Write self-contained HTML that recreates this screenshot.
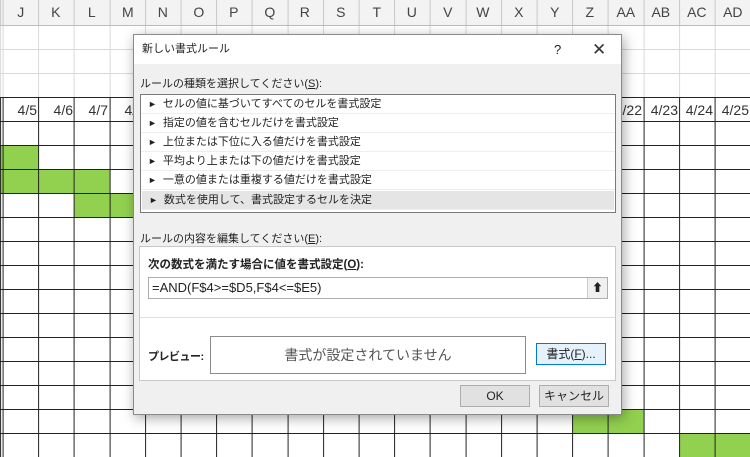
<!DOCTYPE html>
<html><head><meta charset="utf-8"><style>
*{margin:0;padding:0;box-sizing:border-box}
body{width:750px;height:450px;overflow:hidden;position:relative;background:#fff;font-family:"Liberation Sans","Noto Sans CJK JP",sans-serif;color:#222}
.abs{position:absolute}
#hdr{left:0;top:0;width:750px;height:26px;background:#f3f3f3;border-bottom:1px solid #bdbdbd;
background-image:repeating-linear-gradient(to right,#c8c8c8 0 1px,transparent 1px 35.6px);background-position:2.6px 0}
.hl{position:absolute;top:0;height:25px;width:35.6px;text-align:center;line-height:25px;font-size:14px;color:#444}
#light{left:0;top:26px;width:750px;height:72px;
background-image:repeating-linear-gradient(to right,#d9d9d9 0 1px,transparent 1px 35.6px),repeating-linear-gradient(to bottom,transparent 0 23px,#d9d9d9 23px 24px);background-position:2.6px 0,0 0}
#dark{left:0;top:97px;width:750px;height:360px;
background-image:repeating-linear-gradient(to right,#222 0 1px,transparent 1px 35.6px),repeating-linear-gradient(to bottom,#222 0 1px,transparent 1px 24px);background-position:2.6px 0,0 0;background-color:transparent}
.g{position:absolute;background:#92d050}
.dt{position:absolute;top:98px;height:24px;line-height:24px;font-size:14px;color:#333;text-align:right;width:33px}
#dlg{left:133px;top:34px;width:489px;height:381px;background:#f0f0f0;border:1px solid #8a8a8a;box-shadow:2px 3px 12px rgba(0,0,0,.35)}
#title{left:0;top:0;width:487px;height:29px;background:#fff;font-size:11px;line-height:29px;padding-left:8px}
.t12{font-size:11px;position:absolute;white-space:nowrap}
#list{left:6px;top:59px;width:476px;height:119px;background:#fff;border:1px solid #7a7a7a}
.it{position:absolute;left:0;width:474px;height:19px;border-bottom:1px solid #eee;font-size:11px;line-height:19px;padding-left:7px;white-space:nowrap}
.it span{font-size:9px;margin-right:6px}
#panel{left:5px;top:211px;width:477px;height:135px;background:#fff;border:1px solid #c8c8c8}
.btn{position:absolute;background:#e1e1e1;border:1px solid #adadad;font-size:12px;text-align:center;line-height:20px}
</style></head><body>
<div id="hdr" class="abs">
<div class="hl" style="left:3px">J</div><div class="hl" style="left:38px">K</div><div class="hl" style="left:74px">L</div><div class="hl" style="left:110px">M</div><div class="hl" style="left:145px">N</div><div class="hl" style="left:181px">O</div><div class="hl" style="left:216px">P</div><div class="hl" style="left:252px">Q</div><div class="hl" style="left:287px">R</div><div class="hl" style="left:323px">S</div><div class="hl" style="left:359px">T</div><div class="hl" style="left:394px">U</div><div class="hl" style="left:430px">V</div><div class="hl" style="left:465px">W</div><div class="hl" style="left:501px">X</div><div class="hl" style="left:537px">Y</div><div class="hl" style="left:572px">Z</div><div class="hl" style="left:608px">AA</div><div class="hl" style="left:643px">AB</div><div class="hl" style="left:679px">AC</div><div class="hl" style="left:715px">AD</div>
</div>
<div id="light" class="abs"></div>
<div class="g" style="left:0;top:146px;width:39px;height:24px"></div>
<div class="g" style="left:0;top:170px;width:110px;height:24px"></div>
<div class="g" style="left:74px;top:194px;width:80px;height:24px"></div>
<div class="g" style="left:572px;top:409px;width:72px;height:24px"></div>
<div class="g" style="left:679px;top:433px;width:71px;height:24px"></div>
<div id="dark" class="abs"></div>
<div class="dt" style="left:4px">4/5</div><div class="dt" style="left:40px">4/6</div><div class="dt" style="left:75px">4/7</div><div class="dt" style="left:111px">4/8</div>
<div class="dt" style="left:609px">4/22</div><div class="dt" style="left:645px">4/23</div><div class="dt" style="left:680px">4/24</div><div class="dt" style="left:716px">4/25</div>
<div id="dlg" class="abs">
<div id="title" class="abs">新しい書式ルール<span style="position:absolute;left:420px;font-size:13px">?</span><span style="position:absolute;left:458px;font-size:17px;color:#333">✕</span></div>
<div class="t12" style="left:6px;top:40px">ルールの種類を選択してください(<u>S</u>):</div>
<div id="list" class="abs">
<div class="it" style="top:0"><span>►</span>セルの値に基づいてすべてのセルを書式設定</div>
<div class="it" style="top:19px"><span>►</span>指定の値を含むセルだけを書式設定</div>
<div class="it" style="top:38px"><span>►</span>上位または下位に入る値だけを書式設定</div>
<div class="it" style="top:57px"><span>►</span>平均より上または下の値だけを書式設定</div>
<div class="it" style="top:76px"><span>►</span>一意の値または重複する値だけを書式設定</div>
<div class="it" style="top:96px;background:#e5e5e5;left:1px;width:472px"><span>►</span>数式を使用して、書式設定するセルを決定</div>
</div>
<div class="t12" style="left:6px;top:195px">ルールの内容を編集してください(<u>E</u>):</div>
<div id="panel" class="abs">
<div class="t12" style="left:8px;top:9px;font-weight:bold;font-size:11.5px">次の数式を満たす場合に値を書式設定(<u>O</u>):</div>
<div class="abs" style="left:8px;top:30px;width:460px;height:22px;border:1px solid #adadad;background:#fff;font-size:13px;line-height:20px;padding-left:3px">=AND(F$4&gt;=$D5,F$4&lt;=$E5)
<div class="abs" style="right:0;top:0;width:20px;height:20px;background:#f0f0f0;border-left:1px solid #ccc;text-align:center;font-size:11px;line-height:20px">⬆</div></div>
<div class="abs" style="left:0;top:70px;width:475px;height:1px;background:#ddd"></div>
<div class="t12" style="left:8px;top:101px;font-weight:bold;letter-spacing:-0.5px">プレビュー:</div>
<div class="abs" style="left:70px;top:89px;width:316px;height:38px;border:1px solid #8a8a8a;text-align:center;line-height:36px;font-size:14px;color:#555">書式が設定されていません</div>
<div class="btn" style="left:396px;top:96px;width:70px;height:22px;border:1px solid #0078d7;background:#e5f1fb">書式(<u>F</u>)...</div>
</div>
<div class="btn" style="left:326px;top:350px;width:70px;height:22px">OK</div>
<div class="btn" style="left:405px;top:350px;width:70px;height:22px">キャンセル</div>
</div>
</body></html>
